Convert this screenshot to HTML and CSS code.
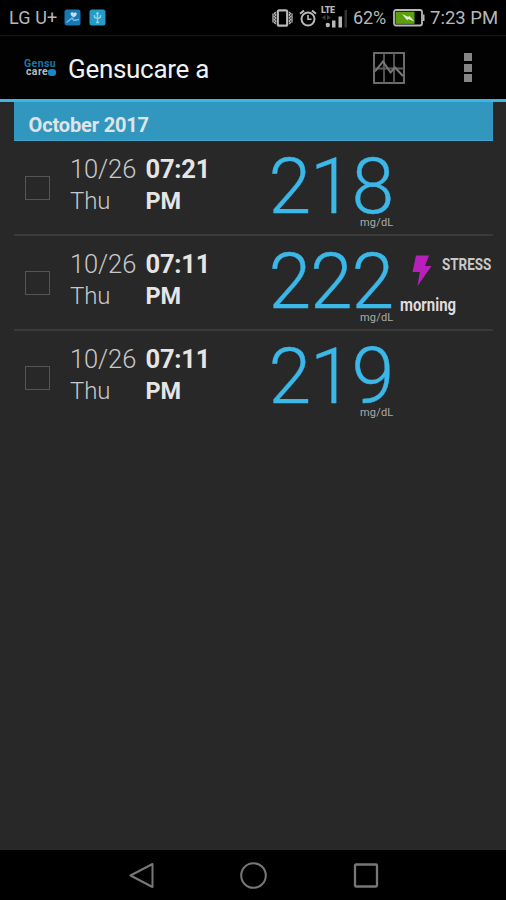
FILE: index.html
```html
<!DOCTYPE html>
<html lang="en">
<head>
<meta charset="utf-8">
<title>Gensucare a</title>
<link rel="stylesheet" href="styles.css">
</head>
<body>
<header class="status">
  <span class="carrier">LG U+</span>
  <svg class="badge" width="17" height="17" viewBox="0 0 17 17"><rect x=".5" y=".5" width="16" height="16" rx="2.5" fill="#1679b5"/><path d="M6.5 4.2c1.3-1.5 2.7-.8 3.1.1.8-1.4 3.600-1 3.200.9-.2 1.200-1.700 2.100-3.100 3.200-1.600-1-3.400-2.400-3.200-4.200z" fill="#c4dcec"/><path d="M2.500 13.500 8 9l2 2.500 5-1" fill="none" stroke="#7bb7dc" stroke-width="1.500"/></svg>
  <svg class="badge second" width="17" height="17" viewBox="0 0 17 17"><rect x=".5" y=".5" width="16" height="16" rx="2.500" fill="#259bc5"/><path d="M8.500 3v10.500M5.500 6v2.200l3 1.500 3-1.500V6M7 4.500h3M7 13.500h3" fill="none" stroke="#8fd0e6" stroke-width="1.400"/></svg>
  <span class="spacer"></span>
  <svg class="vibrate" width="21" height="18" viewBox="0 0 21 18" fill="none" stroke="#b8b8b8"><rect x="5.800" y="1.300" width="9.400" height="15.400" rx="1.500" stroke-width="2.200"/><path d="M3.700 3 2.500 4.500 3.700 6 2.500 7.500 3.700 9 2.500 10.500 3.700 12 2.500 13.500 3.700 15M17.300 3l1.200 1.500L17.300 6l1.200 1.500L17.300 9l1.200 1.500-1.200 1.500 1.200 1.500-1.200 1.500M1 4.500v9M20 4.500v9" stroke-width="1.300"/></svg>
  <svg class="alarm" width="18" height="18" viewBox="0 0 18 18" fill="none" stroke="#b8b8b8"><circle cx="9" cy="10" r="6.500" stroke-width="2"/><path d="M9 6v4.300h3.500" stroke-width="1.600"/><path d="M1 4.800 5 1.500M17 4.800 13 1.500" stroke-width="2"/></svg>
  <span class="signal"><span class="lte">LTE</span><svg width="30" height="22" viewBox="0 0 30 22"><path d="M2.500 10.500 6.500 8v5zM12 10.500 8 8v5z" fill="#3c3c3c"/><circle cx="8.800" cy="18" r="2.200" fill="#b8b8b8"/><path d="M13 13.500h3.500V20.500H13zM19.500 9.500h3.500V20.500h-3.500z" fill="#b8b8b8"/><path d="M25.500 3h2.500v17.500h-2.500z" fill="#333"/></svg></span>
  <span class="percent">62%</span>
  <svg class="battery" width="32" height="18" viewBox="0 0 32 18"><rect x="1" y="1" width="28" height="15.500" rx="2" fill="#000" stroke="#b8b8b8" stroke-width="1.800"/><path d="M30 5.500h1.500v6.500H30z" fill="#b8b8b8"/><path d="M2.500 2.700h19v12.200h-19z" fill="#5ba00c"/><path d="m9 5 6.500 3 .5-1.500 5.500 6-6.500-2.500-.7 1.500z" fill="#e3edd8"/></svg>
  <span class="clock">7:23 PM</span>
</header>
<nav class="appbar">
  <span class="logo"><span class="logo-top">Gensu</span><span class="logo-bottom">care<i></i></span></span>
  <h1>Gensucare a</h1>
  <svg class="chart" width="32" height="32" viewBox="0 0 32 32" fill="none" stroke="#777"><rect x="1" y="1" width="30" height="30" stroke-width="1.800"/><path d="M11 1v30M21 1v30M1 16.500h30" stroke="#5c5c5c" stroke-width="1.800"/><path d="m2 19.500 8-10 7.500 11 4.500-5 8 8.500" stroke-width="2"/></svg>
  <span class="overflow"><i></i><i></i><i></i></span>
</nav>
<main>
  <h2>October 2017</h2>
  <section class="row">
    <i class="check"></i>
    <p class="date"><span>10/26</span><span class="day">Thu</span></p>
    <p class="time"><span>07:21</span><span class="pm">PM</span></p>
    <div class="value"><b>218</b><small>mg/dL</small></div>
  </section>
  <section class="row">
    <i class="check"></i>
    <p class="date"><span>10/26</span><span class="day">Thu</span></p>
    <p class="time"><span>07:11</span><span class="pm">PM</span></p>
    <div class="value"><b>222</b><small>mg/dL</small></div>
    <div class="notes">
      <div class="stress"><svg width="20" height="32" viewBox="0 0 20 32"><path d="M4 .5h13l-4 10.500h6.500L5.500 31l2.300-14H.5z" fill="#b920b9"/></svg><span>STRESS</span></div>
      <span class="morning">morning</span>
    </div>
  </section>
  <section class="row">
    <i class="check"></i>
    <p class="date"><span>10/26</span><span class="day">Thu</span></p>
    <p class="time"><span>07:11</span><span class="pm">PM</span></p>
    <div class="value"><b>219</b><small>mg/dL</small></div>
  </section>
</main>
<footer>
  <svg width="26" height="28" viewBox="0 0 26 28"><path d="M23.500 2v23L1.500 13.500z" fill="none" stroke="#777" stroke-width="2" stroke-linejoin="round"/></svg>
  <svg width="28" height="28" viewBox="0 0 28 28"><circle cx="13.500" cy="13.500" r="12.300" fill="none" stroke="#777" stroke-width="2"/></svg>
  <svg width="26" height="28" viewBox="0 0 26 28"><rect x="2" y="2.500" width="22" height="22" rx="1" fill="none" stroke="#777" stroke-width="2.300"/></svg>
</footer>
</body>
</html>
```
FILE: styles.css
```css
* { box-sizing: border-box; }
body {
  margin: 0;
  height: 900px;
  display: flex;
  flex-direction: column;
  overflow: hidden;
  background: #282828;
  color: #d4d4d4;
  font-family: Roboto, "Liberation Sans", sans-serif;
}
h1, h2, p { margin: 0; }
svg { display: block; flex: none; }
i { font-style: normal; }

.status {
  height: 36px;
  flex: none;
  display: flex;
  align-items: center;
  padding: 0 8px 0 9px;
  background: #000;
  border-bottom: 1px solid #161616;
  color: #b8b8b8;
  font-size: 18.5px;
  white-space: nowrap;
}
.carrier { width: 55px; font-size: 18px; letter-spacing: 0.1px; }
.badge.second { margin-left: 8px; }
.spacer { flex: 1; }
.alarm { margin-left: 6px; }
.signal { position: relative; width: 30px; margin-left: 2px; }
.lte {
  position: absolute;
  left: 2px;
  top: -2px;
  font-size: 9px;
  line-height: 10px;
  font-weight: 900;
  letter-spacing: -0.3px;
}
.percent { width: 40px; margin-left: 4px; font-size: 18px; letter-spacing: -0.1px; }
.clock { width: 68px; margin-left: 5px; font-size: 18.5px; }

.appbar {
  height: 66px;
  flex: none;
  display: flex;
  align-items: center;
  padding: 0 34px 0 24px;
  background: #020202;
  border-bottom: 3px solid #3db5e6;
}
.logo {
  width: 33px;
  display: flex;
  flex-direction: column;
  padding-top: 1px;
  font-weight: 700;
  font-size: 10.5px;
  line-height: 8px;
}
.logo-top { color: #1677a8; letter-spacing: 0.4px; }
.logo-bottom { display: flex; align-items: center; padding-left: 2px; color: #b0c0c8; letter-spacing: 0.4px; }
.logo-bottom i { width: 8px; height: 7px; border-radius: 3px; background: #1688c8; }
h1 {
  flex: 1;
  margin-left: 11px;
  padding-top: 3px;
  color: #f1f1f1;
  font-size: 26px;
  font-weight: 400;
  letter-spacing: -0.3px;
}
.overflow { display: grid; gap: 2.5px; margin-left: 59px; }
.overflow i { width: 8px; height: 8px; background: #858585; }

main { flex: 1; padding: 0 13px 0 14px; }
h2 {
  height: 39px;
  padding: 4px 0 0 14.5px;
  background: #3197be;
  border-bottom: 1px solid #3da5cc;
  color: #e0e4e6;
  font-size: 20px;
  line-height: 38px;
  font-weight: 700;
  letter-spacing: -0.15px;
}
.row {
  height: 94.8px;
  display: grid;
  grid-template-columns: 56px 75.5px 123px 131.5px 92px;
  border-bottom: 2px solid #3a3a3a;
}
.row:last-child { border-color: transparent; }
.check { width: 25px; height: 24px; margin: 35px 0 0 11px; border: 1.5px solid #555; }
.date, .time { display: flex; flex-direction: column; padding-top: 12px; font-size: 25.5px; line-height: 32px; }
.date { font-weight: 300; color: #c8c8c8; letter-spacing: -0.1px; }
.day { font-size: 24px; }
.time { font-weight: 700; color: #e5e5e5; letter-spacing: -0.2px; }
.pm { font-size: 23.5px; }
.value { display: flex; flex-direction: column; color: #3bb7e8; }
.value b {
  height: 77px;
  padding-top: 1px;
  font-size: 77px;
  line-height: 91px;
  font-weight: 300;
  letter-spacing: -1.2px;
  -webkit-text-stroke: 0.4px #3bb7e8;
}
.value small {
  padding-left: 91.5px;
  color: #aaa;
  font-size: 11px;
  line-height: 9px;
  letter-spacing: 0.2px;
}
.notes { display: flex; flex-direction: column; white-space: nowrap; font-weight: 700; }
.stress { display: flex; padding: 19px 0 0 12px; }
.stress span {
  width: 60px;
  margin: 0 -20px 0 10px;
  font-size: 16px;
  line-height: 20px;
  transform: scaleX(0.84);
  transform-origin: left;
  color: #c8c8c8;
}
.morning {
  width: 68px;
  margin-top: 8px;
  font-size: 18px;
  line-height: 20px;
  color: #ddd;
  transform: scaleX(0.83);
  transform-origin: left;
}

footer {
  height: 50px;
  flex: none;
  display: flex;
  align-items: center;
  justify-content: space-between;
  padding: 1px 127px 0 129px;
  background: #000;
}
```
